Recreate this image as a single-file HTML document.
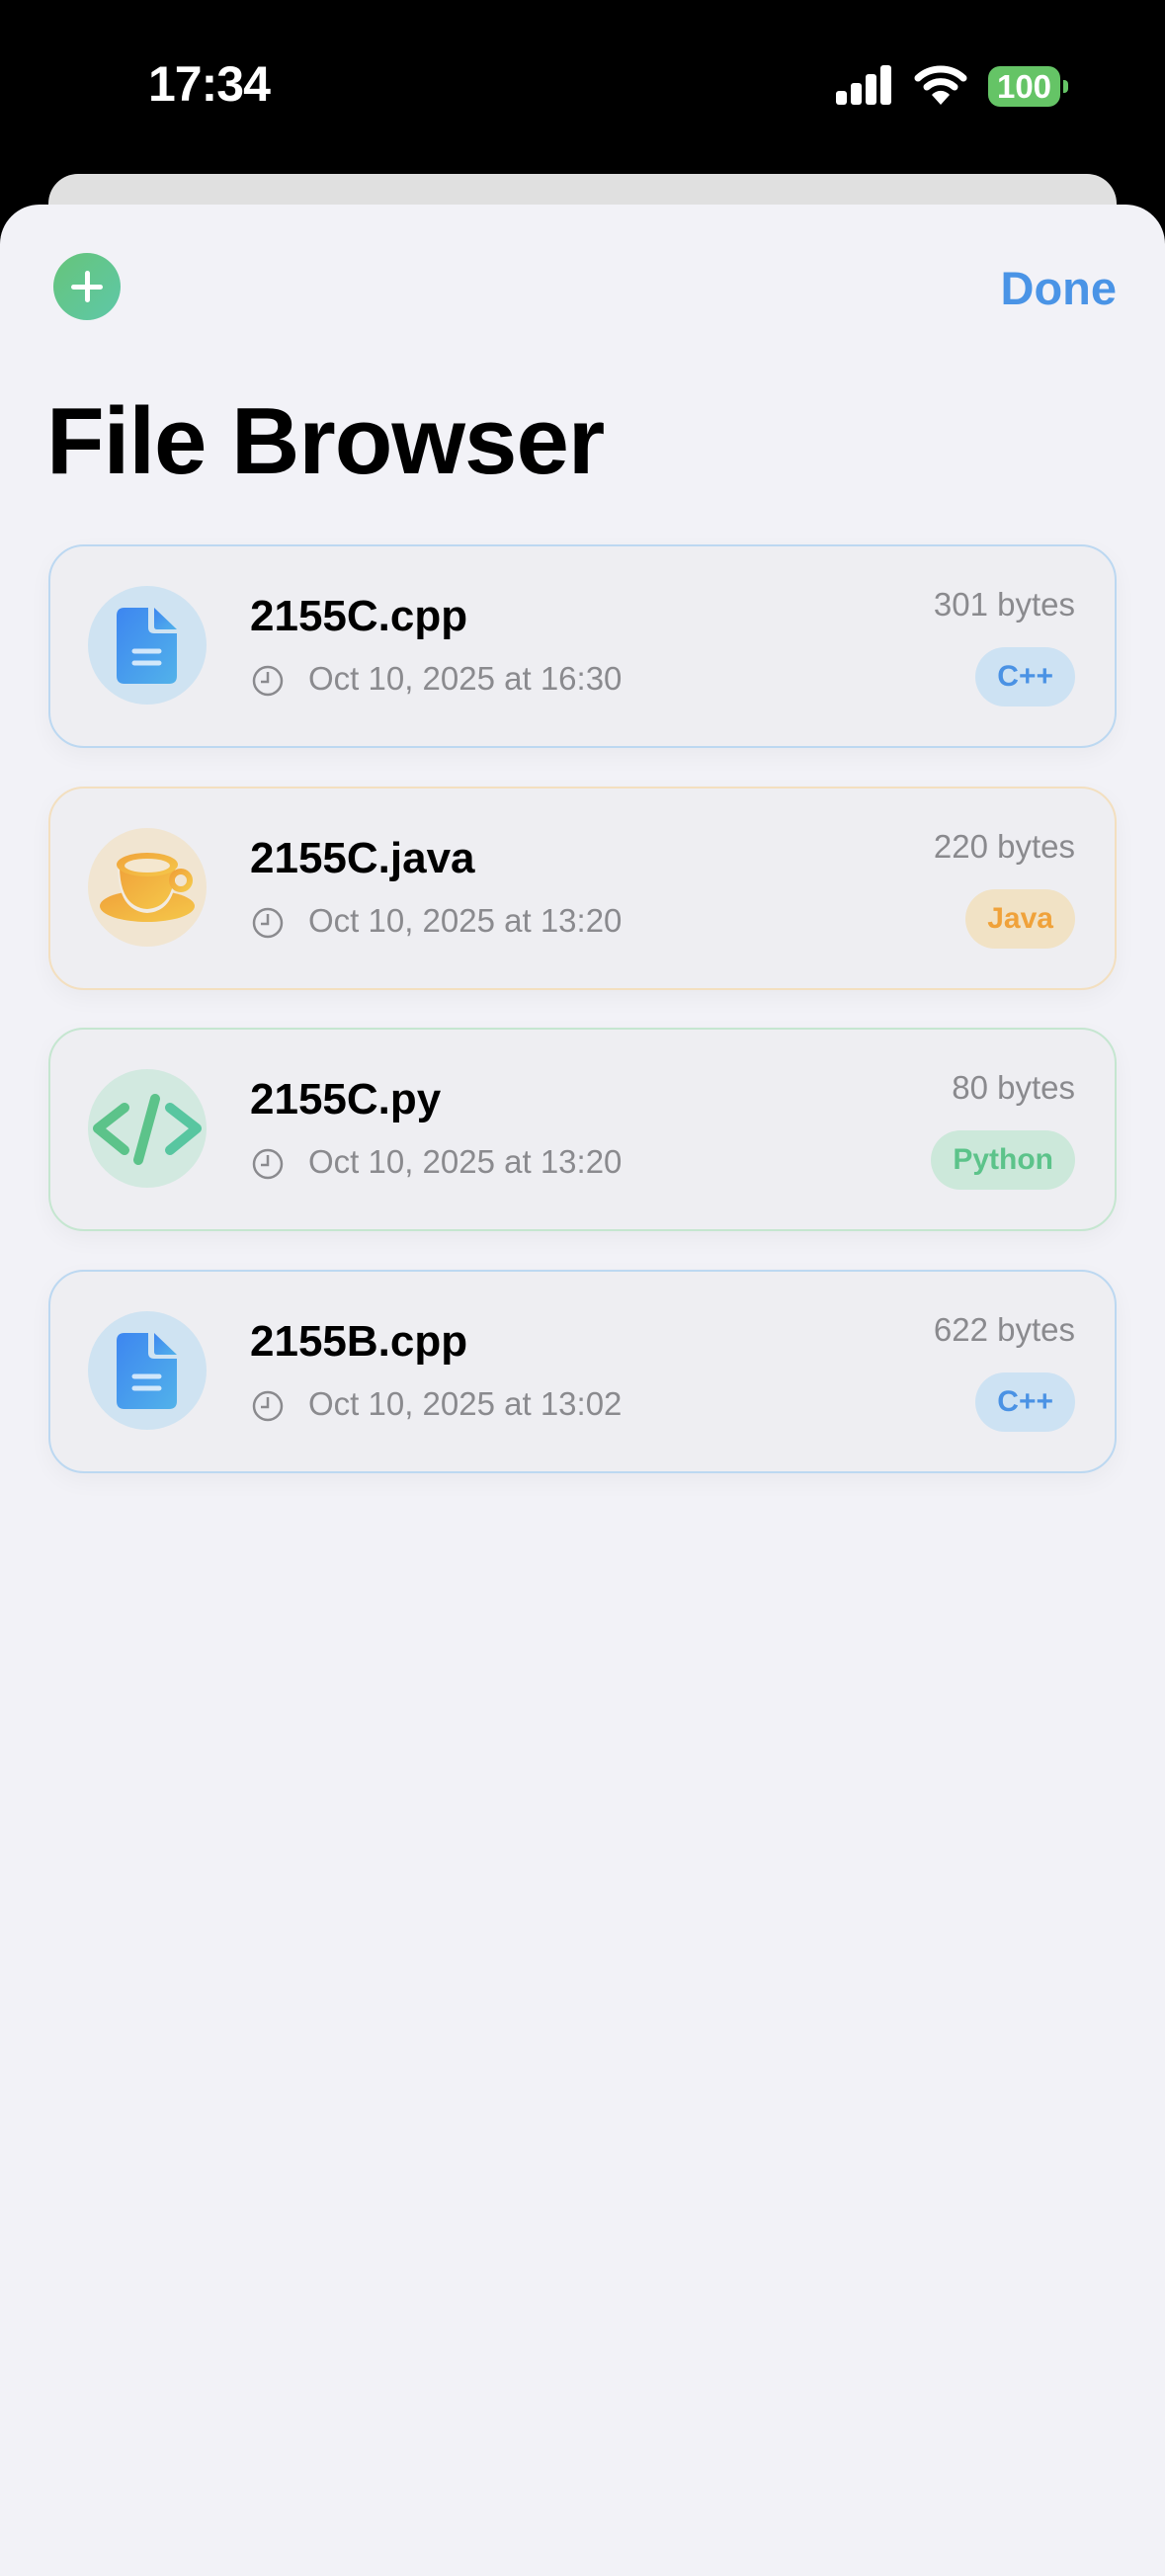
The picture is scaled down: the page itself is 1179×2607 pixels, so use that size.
<!DOCTYPE html>
<html><head><meta charset="utf-8"><style>
*{margin:0;padding:0;box-sizing:border-box}
body{width:1179px;height:2556px;background:#000;position:relative;overflow:hidden;font-family:"Liberation Sans",sans-serif}
.abs{position:absolute}
.time{left:150px;top:56px;font-size:50px;font-weight:bold;color:#fff;letter-spacing:-1px}
.back{left:49px;top:176px;width:1081px;height:80px;background:#e0e0e0;border-radius:30px 30px 0 0}
.sheet{left:0;top:207px;width:1179px;height:2400px;background:#f2f2f7;border-radius:40px 40px 0 0}
.plus{left:54px;top:256px;width:68px;height:68px;border-radius:50%;background:linear-gradient(135deg,#66c47a,#5ec8a8)}
.plus:before{content:"";position:absolute;left:32px;top:18px;width:5px;height:32px;background:#fff;border-radius:3px}
.plus:after{content:"";position:absolute;left:18px;top:32px;width:32px;height:5px;background:#fff;border-radius:3px}
.done{right:49px;top:264px;font-size:47px;font-weight:bold;color:#4a94e6}
.title{left:47px;top:392px;font-size:96px;font-weight:bold;color:#000;letter-spacing:-1px}
.card{left:49px;width:1081px;height:206px;border-radius:36px;background:#eeeef2;border:2.5px solid;box-shadow:0 8px 24px rgba(0,0,0,0.04)}
.ic{position:absolute;left:38px;top:40px;width:120px;height:120px}
.name{position:absolute;left:202px;top:46px;font-size:44px;font-weight:bold;color:#000}
.date{position:absolute;left:261px;top:115px;font-size:33px;color:#8a8a8e}
.clk{position:absolute;left:204px;top:120px;width:32px;height:32px}
.bytes{position:absolute;right:40px;top:40px;font-size:33px;color:#8a8a8e}
.badge{position:absolute;right:40px;top:102px;height:60px;border-radius:30px;font-size:30px;font-weight:bold;line-height:60px;padding:0 22px}
</style></head><body>
<div class="abs time">17:34</div>
<svg class="abs" style="left:846px;top:66px" width="60" height="42"><rect x="0" y="26" width="11" height="14" rx="3" fill="#fff"/><rect x="15" y="18" width="11" height="22" rx="3" fill="#fff"/><rect x="30" y="9" width="11" height="31" rx="3" fill="#fff"/><rect x="45" y="0" width="11" height="40" rx="3" fill="#fff"/></svg>
<svg class="abs" style="left:925px;top:64px" width="54" height="44" viewBox="0 0 54 44"><path d="M4 15 A34 34 0 0 1 50 15" stroke="#fff" stroke-width="7" fill="none" stroke-linecap="round"/><path d="M13 24 A21 21 0 0 1 41 24" stroke="#fff" stroke-width="7" fill="none" stroke-linecap="round"/><path d="M27 42 L18 32 A12 12 0 0 1 36 32 Z" fill="#fff"/></svg>
<div class="abs" style="left:1000px;top:67px;width:73px;height:41px;background:#65c466;border-radius:12px;color:#fff;font-weight:bold;font-size:33px;text-align:center;line-height:41px">100</div>
<div class="abs" style="left:1076px;top:81px;width:5px;height:13px;background:#65c466;border-radius:0 4px 4px 0"></div>
<div class="abs back"></div>
<div class="abs sheet"></div>
<div class="abs plus"></div>
<div class="abs done">Done</div>
<div class="abs title">File Browser</div>

<!-- card 1 -->
<div class="abs card" style="top:551px;border-color:#bcd8f1">
<svg class="ic" viewBox="0 0 120 120"><defs><linearGradient id="b" x1="0" y1="0" x2="1" y2="1"><stop offset="0" stop-color="#3d86f0"/><stop offset="1" stop-color="#52b2ea"/></linearGradient></defs><circle cx="60" cy="60" r="60" fill="#cfe3f2"/><path d="M37 22H61V42q0 6 6 6H90V91q0 8-8 8H37q-8 0-8-8V30q0-8 8-8z" fill="url(#b)"/><path d="M67 22L90 44H70q-3 0-3-3z" fill="url(#b)"/><path d="M47 66H72M47 78H72" stroke="#fff" stroke-opacity=".75" stroke-width="5" stroke-linecap="round"/></svg>
<div class="name">2155C.cpp</div>
<svg class="clk" viewBox="0 0 32 32"><circle cx="16" cy="16" r="14" stroke="#8a8a8e" stroke-width="2.5" fill="none"/><path d="M16 7V17H9" stroke="#8a8a8e" stroke-width="2.5" fill="none"/></svg>
<div class="date">Oct 10, 2025 at 16:30</div>
<div class="bytes">301 bytes</div>
<div class="badge" style="background:#cde2f3;color:#4a92e4">C++</div>
</div>

<!-- card 2 -->
<div class="abs card" style="top:796px;border-color:#f3dfbf">
<svg class="ic" viewBox="0 0 120 120"><defs><linearGradient id="o" x1="0" y1="0" x2="1" y2="1"><stop offset="0" stop-color="#f0a23a"/><stop offset="1" stop-color="#f5c84a"/></linearGradient></defs><circle cx="60" cy="60" r="60" fill="#f1e5d1"/><ellipse cx="60" cy="79" rx="48" ry="16" fill="url(#o)"/><path d="M30 38 Q30 84 60 86 Q90 84 90 38 Z" fill="#f2ebe0"/><path d="M32 38 Q32 80 60 82 Q88 80 88 38 Z" fill="url(#o)"/><ellipse cx="60" cy="37" rx="31" ry="12" fill="url(#o)"/><ellipse cx="60" cy="38" rx="23" ry="7" fill="#f4e7cf"/><circle cx="94" cy="53" r="9" stroke="url(#o)" stroke-width="6" fill="none"/></svg>
<div class="name">2155C.java</div>
<svg class="clk" viewBox="0 0 32 32"><circle cx="16" cy="16" r="14" stroke="#8a8a8e" stroke-width="2.5" fill="none"/><path d="M16 7V17H9" stroke="#8a8a8e" stroke-width="2.5" fill="none"/></svg>
<div class="date">Oct 10, 2025 at 13:20</div>
<div class="bytes">220 bytes</div>
<div class="badge" style="background:#f1e2c5;color:#f0a23a">Java</div>
</div>

<!-- card 3 -->
<div class="abs card" style="top:1040px;border-color:#c5e6d0">
<svg class="ic" viewBox="0 0 120 120"><circle cx="60" cy="60" r="60" fill="#d2e9e0"/><g stroke="#5cc38a" stroke-width="10" stroke-linecap="round" stroke-linejoin="round" fill="none"><path d="M37 39L10 60L37 82"/><path d="M68 30L51 92"/><path d="M83 39L110 60L83 82" stroke="#58c6a0"/></g></svg>
<div class="name">2155C.py</div>
<svg class="clk" viewBox="0 0 32 32"><circle cx="16" cy="16" r="14" stroke="#8a8a8e" stroke-width="2.5" fill="none"/><path d="M16 7V17H9" stroke="#8a8a8e" stroke-width="2.5" fill="none"/></svg>
<div class="date">Oct 10, 2025 at 13:20</div>
<div class="bytes">80 bytes</div>
<div class="badge" style="background:#cce8da;color:#5cc38a">Python</div>
</div>

<!-- card 4 -->
<div class="abs card" style="top:1285px;border-color:#bcd8f1">
<svg class="ic" viewBox="0 0 120 120"><circle cx="60" cy="60" r="60" fill="#cfe3f2"/><path d="M37 22H61V42q0 6 6 6H90V91q0 8-8 8H37q-8 0-8-8V30q0-8 8-8z" fill="url(#b)"/><path d="M67 22L90 44H70q-3 0-3-3z" fill="url(#b)"/><path d="M47 66H72M47 78H72" stroke="#fff" stroke-opacity=".75" stroke-width="5" stroke-linecap="round"/></svg>
<div class="name">2155B.cpp</div>
<svg class="clk" viewBox="0 0 32 32"><circle cx="16" cy="16" r="14" stroke="#8a8a8e" stroke-width="2.5" fill="none"/><path d="M16 7V17H9" stroke="#8a8a8e" stroke-width="2.5" fill="none"/></svg>
<div class="date">Oct 10, 2025 at 13:02</div>
<div class="bytes">622 bytes</div>
<div class="badge" style="background:#cde2f3;color:#4a92e4">C++</div>
</div>
</body></html>
